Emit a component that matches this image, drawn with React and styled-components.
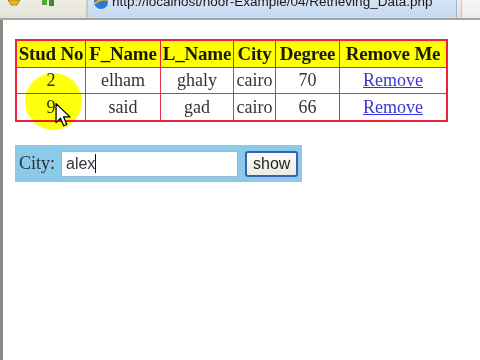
import React from "react";
import styled, { createGlobalStyle } from "styled-components";

const Global = createGlobalStyle`
  html, body { margin: 0; padding: 0; background: #fff; }
  body { width: 480px; height: 360px; overflow: hidden; font-family: "Liberation Serif", "Times New Roman", serif; }
`;

const Page = styled.div`
  position: relative;
  width: 480px;
  height: 360px;
  display: flex;
  flex-direction: column;
  overflow: hidden;
`;

const Chrome = styled.div`
  height: 18px;
  flex: none;
  display: flex;
  align-items: stretch;
  background: linear-gradient(#eeede6, #e4e2d8);
  border-bottom: 2px solid #a6a6a0;
`;

const ToolIcons = styled.div`
  width: 78px;
  flex: none;
  display: flex;
  align-items: flex-start;
  gap: 22px;
  padding-left: 8px;
  border-right: 2px solid #c9c7be;
  overflow: hidden;
`;

const Tab = styled.div`
  width: 363px;
  flex: none;
  display: flex;
  align-items: flex-start;
  gap: 3px;
  padding-left: 5px;
  background: linear-gradient(#d6e4f6, #c4d8f0);
  border-right: 1px solid #9fb4cf;
  overflow: hidden;
`;

const Url = styled.span`
  font-family: "Liberation Sans", Arial, sans-serif;
  font-size: 13.5px;
  line-height: 16px;
  margin-top: -6px;
  color: #1a1a1a;
  white-space: nowrap;
`;

const SideTab = styled.div`
  flex: 1;
  margin-left: 4px;
  background: linear-gradient(#f6f6f4, #ececea);
  border-left: 1px solid #c4c4c0;
`;

const Content = styled.div`
  flex: 1;
  border-left: 3px solid #8a8a82;
  padding: 19px 0 0 12px;
  display: flex;
  flex-direction: column;
  align-items: flex-start;
  gap: 23px;
`;

const Table = styled.table`
  border-collapse: collapse;
  border: 2px solid #f0203c;
  table-layout: fixed;
  color: #222;
`;

const Th = styled.th`
  width: ${(p) => p.$w}px;
  height: 26px;
  padding: 0;
  background: #ffff00;
  border: 1px solid #f0203c;
  font-size: 19px;
  font-weight: bold;
  white-space: nowrap;
  text-align: center;
  color: #1a1a0a;
  letter-spacing: -0.2px;
`;

const Td = styled.td`
  height: ${(p) => p.$h || 25}px;
  padding: 0;
  border: 1px solid #e8304a;
  font-size: 18px;
  text-align: center;
  color: #333;
`;

const Link = styled.a`
  color: #3a36d8;
  text-decoration: underline;
  cursor: pointer;
`;

const Form = styled.form`
  margin: 0;
  width: 287px;
  height: 37px;
  box-sizing: border-box;
  background: #8ccaea;
  display: flex;
  align-items: center;
  padding: 0 4px 0 4px;
  gap: 6px;
`;

const Label = styled.label`
  font-size: 18px;
  color: #2a3038;
  width: 36px;
`;

const InputBox = styled.div`
  width: 179px;
  height: 26px;
  box-sizing: border-box;
  background: #fff;
  border: 1px solid #9eb6d2;
  display: flex;
  align-items: center;
  padding-left: 4px;
  font-family: "Liberation Sans", Arial, sans-serif;
  font-size: 16px;
  color: #3a3040;
`;

const Caret = styled.span`
  display: inline-block;
  width: 1px;
  height: 19px;
  background: #111;
`;

const Button = styled.button`
  width: 53px;
  height: 26px;
  margin-left: 1px;
  box-sizing: border-box;
  border: 2px solid #3a60b0;
  border-radius: 3px;
  background: linear-gradient(#fbfbf8, #ecece6);
  font-family: "Liberation Sans", Arial, sans-serif;
  font-size: 16px;
  color: #222;
  padding: 0;
`;

const Highlight = styled.div`
  position: absolute;
  left: 25px;
  top: 73px;
  width: 57px;
  height: 57px;
  border-radius: 50%;
  background: #ffff10;
  mix-blend-mode: multiply;
  pointer-events: none;
`;

const Cursor = styled.svg`
  position: absolute;
  left: 55px;
  top: 103px;
  pointer-events: none;
`;

const cols = [
  ["Stud No", 68],
  ["F_Name", 74],
  ["L_Name", 72],
  ["City", 41],
  ["Degree", 63],
  ["Remove Me", 106],
];

const rows = [
  ["2", "elham", "ghaly", "cairo", "70"],
  ["9", "said", "gad", "cairo", "66"],
];

export default function App() {
  return (
    <Page>
      <Global />
      <Chrome>
        <ToolIcons>
          <svg width="12" height="6" viewBox="0 0 12 6">
            <path d="M0 0 L12 0 L9 5 L3 5 Z" fill="#e8b820" stroke="#a07810" strokeWidth="0.8" />
          </svg>
          <svg width="14" height="7" viewBox="0 0 14 7">
            <rect x="0" y="0" width="5" height="5" fill="#58a838" />
            <rect x="7" y="0" width="5" height="6" fill="#3c8c2c" />
          </svg>
        </ToolIcons>
        <Tab>
          <svg width="16" height="10" viewBox="0 0 16 10" style={{ flex: "none" }}>
            <circle cx="8" cy="2" r="7" fill="#2a7ad8" />
            <path d="M1 4 Q8 -2 15 0" stroke="#f0b020" strokeWidth="2" fill="none" />
          </svg>
          <Url>http://localhost/noor-Example/04/Retrieving_Data.php</Url>
        </Tab>
        <SideTab />
      </Chrome>
      <Content>
        <Table>
          <thead>
            <tr>
              {cols.map(([c, w]) => (
                <Th key={c} $w={w}>{c}</Th>
              ))}
            </tr>
          </thead>
          <tbody>
            {rows.map((r, i) => (
              <tr key={i}>
                {r.map((v, j) => (
                  <Td key={j} $h={i === 0 ? 25 : 26}>{v}</Td>
                ))}
                <Td $h={i === 0 ? 25 : 26}>
                  <Link>Remove</Link>
                </Td>
              </tr>
            ))}
          </tbody>
        </Table>
        <Form onSubmit={(e) => e.preventDefault()}>
          <Label>City:</Label>
          <InputBox>
            alex<Caret />
          </InputBox>
          <Button type="button">show</Button>
        </Form>
      </Content>
      <Highlight />
      <Cursor width="16" height="24" viewBox="0 0 12 19">
        <path
          d="M0.5 0.5 L0.5 15.5 L4 12 L6.5 18 L9 17 L6.5 11 L11.5 11 Z"
          fill="#fff"
          stroke="#000"
          strokeWidth="1"
          strokeLinejoin="round"
        />
      </Cursor>
    </Page>
  );
}
